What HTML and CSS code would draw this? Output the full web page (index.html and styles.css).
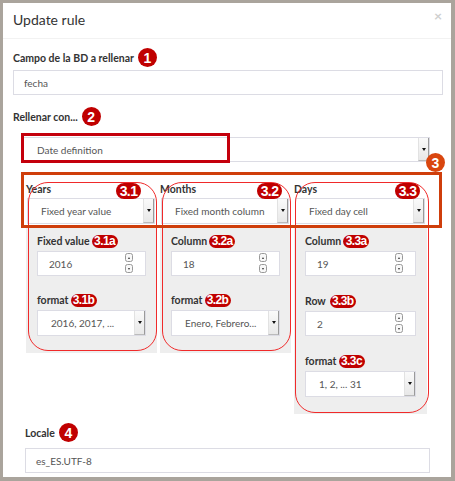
FILE: index.html
```html
<!DOCTYPE html>
<html>
<head>
<meta charset="utf-8">
<link rel="stylesheet" href="styles.css">
</head>
<body>
<div class="modal">
  <div class="header">
    <span class="title">Update rule</span>
    <span class="close">×</span>
  </div>
  <div class="body">
    <div class="lbl">Campo de la BD a rellenar <span class="circ">1</span></div>
    <div class="input">fecha</div>

    <div class="lbl l2">Rellenar con... <span class="circ">2</span></div>
    <div class="inner">
      <div class="sel-wrap">
        <div class="select main"><span class="val">Date definition</span><span class="arrow"><i></i></span></div>
        <div class="ann-rect"></div>
      </div>

      <div class="cols">
        <div class="box3"><span class="circ orange">3</span></div>

        <div class="col">
          <div class="colhead">Years</div>
          <div class="select"><span class="val">Fixed year value</span><span class="arrow"><i></i></span></div>
          <div class="well">
            <div class="group">
              <div class="sublbl">Fixed value<span class="pill">3.1a</span></div>
              <div class="input num">2016<span class="spin"><b><i class="up"></i></b><b><i class="dn"></i></b></span></div>
            </div>
            <div class="group">
              <div class="sublbl">format<span class="pill">3.1b</span></div>
              <div class="select sub"><span class="val">2016, 2017, ...</span><span class="arrow"><i></i></span></div>
            </div>
          </div>
          <div class="ring"></div>
          <span class="pill big b31">3.1</span>
        </div>

        <div class="col">
          <div class="colhead">Months</div>
          <div class="select"><span class="val">Fixed month column</span><span class="arrow"><i></i></span></div>
          <div class="well">
            <div class="group">
              <div class="sublbl">Column<span class="pill">3.2a</span></div>
              <div class="input num">18<span class="spin"><b><i class="up"></i></b><b><i class="dn"></i></b></span></div>
            </div>
            <div class="group">
              <div class="sublbl">format<span class="pill">3.2b</span></div>
              <div class="select sub"><span class="val">Enero, Febrero...</span><span class="arrow"><i></i></span></div>
            </div>
          </div>
          <div class="ring"></div>
          <span class="pill big b32">3.2</span>
        </div>

        <div class="col c3">
          <div class="colhead">Days</div>
          <div class="select"><span class="val">Fixed day cell</span><span class="arrow"><i></i></span></div>
          <div class="well">
            <div class="group">
              <div class="sublbl">Column<span class="pill">3.3a</span></div>
              <div class="input num">19<span class="spin"><b><i class="up"></i></b><b><i class="dn"></i></b></span></div>
            </div>
            <div class="group">
              <div class="sublbl">Row<span class="pill gap">3.3b</span></div>
              <div class="input num">2<span class="spin"><b><i class="up"></i></b><b><i class="dn"></i></b></span></div>
            </div>
            <div class="group">
              <div class="sublbl">format<span class="pill">3.3c</span></div>
              <div class="select sub"><span class="val">1, 2, ... 31</span><span class="arrow"><i></i></span></div>
            </div>
          </div>
          <div class="ring"></div>
          <span class="pill big b33">3.3</span>
        </div>
      </div>

      <div class="locale">
        <div class="lbl">Locale <span class="circ">4</span></div>
        <div class="input loc">es_ES.UTF-8</div>
      </div>
    </div>
  </div>
</div>
</body>
</html>
```

FILE: styles.css
```css
* { box-sizing: border-box; }
html, body { margin: 0; padding: 0; }
body {
  background: #aaa49c;
  width: 455px;
  height: 481px;
  overflow: hidden;
  font-family: Lato, "Open Sans", sans-serif;
}
.modal {
  margin: 3px 4px 0 3px;
  height: 474px;
  background: #fff;
}
.header {
  height: 36px;
  border-bottom: 1px solid #f2f2f2;
  display: flex;
  align-items: center;
  justify-content: space-between;
  padding: 0 10px 2px 10px;
}
.title {
  font-size: 14px;
  color: #333;
  font-weight: 400;
}
.close {
  font-size: 14px;
  font-weight: 700;
  color: #cfcfcf;
  margin-top: -8px;
  margin-right: -1px;
}
.body {
  padding: 9px 8px 0 10px;
}
.lbl {
  display: flex;
  align-items: center;
  height: 19px;
  font-size: 10.5px;
  font-weight: 700;
  color: #333;
  gap: 4px;
}
.l2 { margin-top: 12px; }
.circ {
  display: inline-flex;
  width: 19px;
  height: 19px;
  border-radius: 50%;
  background: #c00000;
  color: #fff;
  font-family: "Liberation Sans", Arial, sans-serif;
  font-weight: 700;
  font-size: 14px;
  align-items: center;
  justify-content: center;
}
.circ.orange { background: #d9460f; }
.input {
  margin-top: 3px;
  height: 25px;
  border: 1px solid #dcdce4;
  background: #fff;
  padding-left: 10px;
  display: flex;
  align-items: center;
  font-size: 10px;
  color: #555;
}
.inner {
  margin: 0 13px 0 10px;
}
.sel-wrap {
  position: relative;
  margin-top: 11px;
}
.select {
  height: 26px;
  border: 1px solid #dcdce4;
  background: #fff;
  padding-left: 13px;
  display: flex;
  align-items: center;
  font-size: 10px;
  color: #555;
}
.select .val { flex: 1; white-space: nowrap; overflow: hidden; }
.select.main { height: 25px; }
.arrow {
  align-self: stretch;
  width: 11px;
  background: linear-gradient(#fafafa, #e8e8e8);
  border-left: 1px solid #e2e2e2;
  border-right: 1px solid #9a9a9a;
  border-bottom: 1px solid #bbb;
  display: flex;
  align-items: center;
  justify-content: center;
}
.arrow i {
  width: 0; height: 0;
  border-left: 2.5px solid transparent;
  border-right: 2.5px solid transparent;
  border-top: 3px solid #111;
}
.ann-rect {
  position: absolute;
  left: -2px;
  top: -4px;
  width: 209px;
  height: 30px;
  border: 3px solid #c4000c;
}
.cols {
  position: relative;
  margin-top: 18px;
  padding-left: 3px;
  display: grid;
  grid-template-columns: 131px 131px 133px;
  column-gap: 3px;
  align-items: start;
}
.box3 {
  position: absolute;
  left: -2px;
  top: -8px;
  width: 421px;
  height: 56px;
  border: 3px solid #cf3e0b;
  z-index: 2;
}
.box3 .circ {
  position: absolute;
  right: -6px;
  top: -22px;
}
.col {
  position: relative;
}
.colhead {
  height: 18px;
  line-height: 18px;
  font-size: 10.5px;
  font-weight: 700;
  color: #333;
}
.col .select {
  margin: 0 2px 0 1px;
}
.well {
  margin-top: 4px;
  background: #eee;
  padding: 6px 11px 17px 11px;
}
.group + .group { margin-top: 17px; }
.c3 .group + .group { margin-top: 18px; }
.sublbl {
  height: 14px;
  display: flex;
  align-items: center;
  font-size: 10.5px;
  font-weight: 700;
  color: #333;
}
.pill {
  display: inline-flex;
  align-items: center;
  justify-content: center;
  height: 13px;
  width: 26px;
  margin-left: 2px;
  border-radius: 7px;
  background: #c00000;
  color: #fff;
  font-family: "Liberation Sans", Arial, sans-serif;
  font-weight: 700;
  font-size: 12px;
  letter-spacing: -0.6px;
}
.pill.gap { margin-left: 4px; }
.pill.big {
  position: absolute;
  top: 3px;
  width: 25px;
  height: 16px;
  border-radius: 8px;
  font-size: 14px;
  z-index: 3;
}
.b31 { left: 88px; }
.b32 { left: 95px; }
.b33 { left: 99px; }
.well .input { margin-top: 3px; padding-left: 11px; }
.well .select { margin: 3px 0 0 0; padding-left: 13px; }
.num { position: relative; }
.spin {
  position: absolute;
  right: 12px;
  top: 1px;
  display: flex;
  flex-direction: column;
  gap: 2px;
}
.spin b {
  display: flex;
  width: 8px;
  height: 9px;
  border: 1px solid #999;
  border-radius: 2.5px;
  background: #f8f8f8;
  align-items: center;
  justify-content: center;
}
.spin i { width: 0; height: 0; border-left: 1.5px solid transparent; border-right: 1.5px solid transparent; }
.spin i.up { border-bottom: 2px solid #333; }
.spin i.dn { border-top: 2px solid #333; }
.ring {
  position: absolute;
  left: 2px;
  right: 0;
  top: 2px;
  bottom: 2px;
  border: 1px solid #f02a2a;
  border-radius: 20px;
  z-index: 1;
  pointer-events: none;
}
.c3 .ring { left: 1px; right: -2px; bottom: 1px; }
.locale {
  margin: 9px 0 0 2px;
}
.loc { margin-top: 6px; }
```
